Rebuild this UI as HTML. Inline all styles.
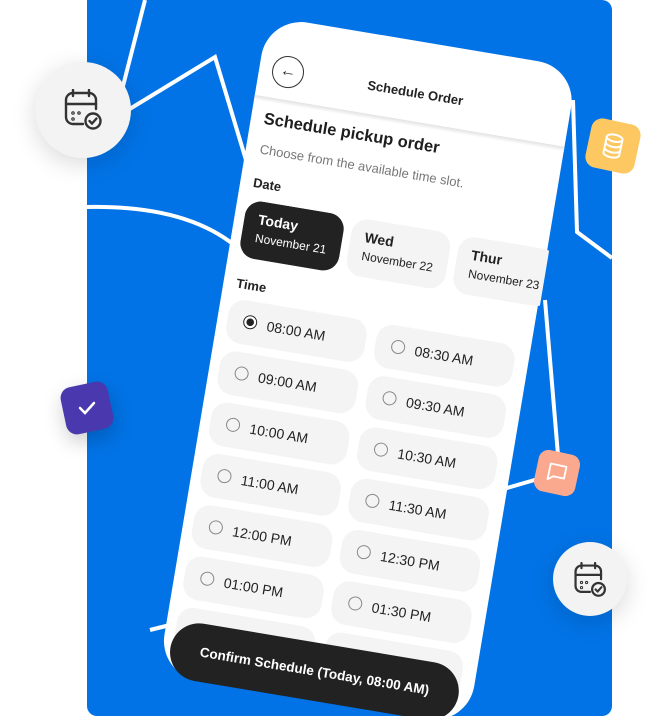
<!DOCTYPE html>
<html><head><meta charset="utf-8"><style>
*{margin:0;padding:0;box-sizing:border-box}
html,body{width:661px;height:716px;overflow:hidden}
body{background:#fff;font-family:"Liberation Sans",sans-serif;position:relative}
.blue{position:absolute;left:87px;top:0;width:525px;height:716px;background:#0273E6;border-radius:0 10px 10px 10px}
svg.lines{position:absolute;left:0;top:0}
.phone{position:absolute;left:268px;top:16px;width:314px;height:667px;background:#fff;border-radius:40px;transform:rotate(9.5deg);transform-origin:0 0}
.phone .a{position:absolute}
.back{left:13px;top:36px;width:32px;height:32px;border:1px solid #333;border-radius:50%;font-size:16px;line-height:29px;text-align:center;color:#222}
.ttl{left:0;width:316px;top:44px;text-align:center;font-size:13px;font-weight:bold;color:#222}
.sep{left:0;top:80px;width:314px;height:5px;background:linear-gradient(#e2e2e2,#fff)}
.h1{left:13px;top:93px;font-size:16.5px;font-weight:bold;color:#1e1e1e}
.sub{left:14px;top:125px;font-size:13px;color:#777}
.lbl{font-size:13px;font-weight:bold;color:#222}
.dates{left:10px;top:184px;width:306px;height:60px;overflow:hidden}
.card{position:absolute;top:0;width:100px;height:58px;border-radius:16px;background:#f4f4f4;padding:10px 0 0 14px;color:#222}
.card b{display:block;font-size:14px}
.card span{display:block;font-size:12px;margin-top:4px}
.card.on{background:#222;color:#fff}
.pill{position:absolute;width:140px;height:44px;border-radius:16px;background:#f4f4f4;font-size:14px;color:#222;padding:14px 0 0 40px}
.pill:before{content:"";position:absolute;left:16px;top:14px;width:14px;height:14px;border:1.6px solid #888;border-radius:50%;box-sizing:border-box}
.pill.e:before{display:none}
.pill.on:before{border-color:#222;background:radial-gradient(#222 0 3.5px,#fff 4px)}
.btn{left:8px;top:610px;width:292px;height:58px;border-radius:29px;background:#222;color:#fff;font-size:13.5px;font-weight:bold;text-align:center;line-height:58px}
.circ{position:absolute;border-radius:50%;background:#f3f3f3;box-shadow:0 6px 24px rgba(0,0,0,.15)}
.sq{position:absolute;border-radius:11px}
</style></head><body>
<div class="blue"></div>
<svg class="lines" width="661" height="716" fill="none" stroke="#fff" stroke-width="4">
<path d="M145 0 L122 90"/>
<path d="M128 110 L215 57 L252 180"/>
<path d="M87 207 Q190 205 240 250"/>
<path d="M573 100 L577 232 L612 258"/>
<path d="M545 300 L558 455"/>
<path d="M538 479 L500 490"/>
<path d="M150 630 L170 625"/>
</svg>
<div class="phone">
<div class="a back">←</div>
<div class="a ttl">Schedule Order</div>
<div class="a sep"></div>
<div class="a h1">Schedule pickup order</div>
<div class="a sub">Choose from the available time slot.</div>
<div class="a lbl" style="left:13px;top:159px">Date</div>
<div class="a dates">
<div class="card on" style="left:0"><b>Today</b><span>November 21</span></div>
<div class="card" style="left:108px"><b>Wed</b><span>November 22</span></div>
<div class="card" style="left:216px"><b>Thur</b><span>November 23</span></div>
</div>
<div class="a lbl" style="left:13px;top:261px">Time</div>
<div class="pill on" style="left:10px;top:284px">08:00 AM</div>
<div class="pill" style="left:160px;top:284px">08:30 AM</div>
<div class="pill" style="left:10px;top:336px">09:00 AM</div>
<div class="pill" style="left:160px;top:336px">09:30 AM</div>
<div class="pill" style="left:10px;top:388px">10:00 AM</div>
<div class="pill" style="left:160px;top:388px">10:30 AM</div>
<div class="pill" style="left:10px;top:440px">11:00 AM</div>
<div class="pill" style="left:160px;top:440px">11:30 AM</div>
<div class="pill" style="left:10px;top:492px">12:00 PM</div>
<div class="pill" style="left:160px;top:492px">12:30 PM</div>
<div class="pill" style="left:10px;top:544px">01:00 PM</div>
<div class="pill" style="left:160px;top:544px">01:30 PM</div>
<div class="pill e" style="left:10px;top:596px"></div>
<div class="pill e" style="left:160px;top:596px"></div>
<div class="a btn">Confirm Schedule (Today, 08:00 AM)</div>
</div>
<div class="circ" style="left:35px;top:62px;width:96px;height:96px"></div>
<svg style="position:absolute;left:63px;top:89px" width="40" height="42" viewBox="0 0 40 42" fill="none" stroke="#333" stroke-width="2.4" stroke-linecap="round">
<path d="M20 35 H10 a7 7 0 0 1 -7 -7 V11 a7 7 0 0 1 7 -7 H26 a7 7 0 0 1 7 7 V20"/><path d="M10 1 V7 M26 1 V7 M3 15 H33"/>
<circle cx="10" cy="24" r=".6"/><circle cx="10" cy="30" r=".6"/><circle cx="16" cy="24" r=".6"/>
<circle cx="30" cy="32" r="7.5"/><path d="M26.5 32 l2.5 2.5 l4.5 -5" stroke-width="2.4"/></svg>
<div class="circ" style="left:553px;top:542px;width:74px;height:74px"></div>
<svg style="position:absolute;left:573px;top:562px;" width="34" height="36" viewBox="0 0 40 42" fill="none" stroke="#333" stroke-width="2.6" stroke-linecap="round">
<path d="M20 35 H10 a7 7 0 0 1 -7 -7 V11 a7 7 0 0 1 7 -7 H26 a7 7 0 0 1 7 7 V20"/><path d="M10 1 V7 M26 1 V7 M3 15 H33"/>
<circle cx="10" cy="24" r=".6"/><circle cx="10" cy="30" r=".6"/><circle cx="16" cy="24" r=".6"/>
<circle cx="30" cy="32" r="7.5"/><path d="M26.5 32 l2.5 2.5 l4.5 -5" stroke-width="2.4"/></svg>
<div class="sq" style="left:588px;top:121px;width:50px;height:50px;background:#FDC862;transform:rotate(12deg)"></div>
<svg style="position:absolute;left:601px;top:133px;transform:rotate(12deg)" width="24" height="26" viewBox="0 0 24 26" fill="none" stroke="#fff" stroke-width="2"><ellipse cx="12" cy="5" rx="8" ry="3.5"/><path d="M4 5 V21 a8 3.5 0 0 0 16 0 V5 M4 10.5 a8 3.5 0 0 0 16 0 M4 16 a8 3.5 0 0 0 16 0"/></svg>
<div class="sq" style="left:63px;top:384px;width:48px;height:48px;background:#4A38AE;transform:rotate(-12deg);box-shadow:0 8px 20px rgba(0,0,0,.2)"></div>
<svg style="position:absolute;left:77px;top:399px" width="20" height="18" viewBox="0 0 20 18" fill="none" stroke="#fff" stroke-width="2.5" stroke-linecap="round"><path d="M3 9 l5 5 l9 -10"/></svg>
<div class="sq" style="left:536px;top:452px;width:42px;height:42px;background:#FBA98E;border-radius:10px;transform:rotate(12deg)"></div>
<svg style="position:absolute;left:546px;top:462px;transform:rotate(12deg)" width="22" height="22" viewBox="0 0 22 22" fill="none" stroke="#fff" stroke-width="1.8" stroke-linejoin="round"><path d="M3 3 H19 V15 H8 L3 19 Z"/></svg>
</body></html>
